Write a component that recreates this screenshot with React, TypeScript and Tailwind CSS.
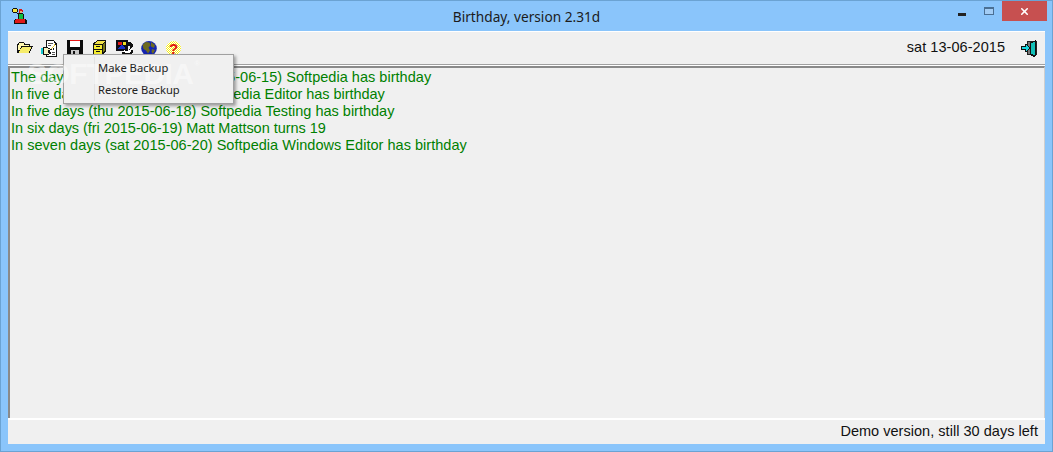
import React from 'react';
import { X } from 'lucide-react';

const lines = [
  { text: 'The day after tomorrow (mon 2015-06-15) Softpedia has birthday', cls: 'tracking-[0.03px]' },
  { text: 'In five days (thu 2015-06-18) Softpedia Editor has birthday', cls: 'tracking-[-0.03px]' },
  { text: 'In five days (thu 2015-06-18) Softpedia Testing has birthday', cls: '' },
  { text: 'In six days (fri 2015-06-19) Matt Mattson turns 19', cls: 'tracking-[-0.04px]' },
  { text: 'In seven days (sat 2015-06-20) Softpedia Windows Editor has birthday', cls: 'tracking-[0.03px]' },
];

function AppIcon() {
  return (
    <svg width="15" height="17" viewBox="0 0 15 17" shapeRendering="crispEdges">
      <path d="M1 0h4v1h1v3H5v1H1V4H0V1h1z" fill="#111" />
      <path d="M1 1h4v3H1z" fill="#f5e642" />
      <path d="M5 5h1v1h1v1h1v1H7V7H6V6H5z" fill="#111" />
      <path d="M7 1h3v1h1v2h-1v1H7z" fill="#d81818" />
      <path d="M8 3h2v2H8z" fill="#e8b080" />
      <path d="M6 5h5v1h1v5H6z" fill="#111" />
      <path d="M7 6h4v5H7z" fill="#0fc040" />
      <path d="M3 11h11v1h1v4H2v-4h1z" fill="#111" />
      <path d="M4 11h9v4H3v-3h1z" fill="#e01818" />
    </svg>
  );
}

function FolderIcon() {
  return (
    <svg width="16" height="12" viewBox="0 0 16 12" shapeRendering="crispEdges">
      <path d="M2 0h5v1h1v1h5v2h3v1h-1v2h-1v2h-1v2H0V2h1V1h1z" fill="#111" />
      <path d="M2 1h5v2h5v1H4v2H3v2H1V3h1z" fill="#fff8b0" />
      <path d="M5 5h9v2h-1v2h-1v2H2V9h1V7h1V6h1z" fill="#f6ec6a" />
    </svg>
  );
}

function NotesIcon() {
  return (
    <svg width="18" height="17" viewBox="0 0 18 17" shapeRendering="crispEdges">
      <path d="M5 0h8v1h1v1h1v1h1v14H5z" fill="#111" />
      <path d="M6 1h7v2h2v13H6z" fill="#fff" />
      <path d="M7 3h5v1H7zM7 5h3v1H7zM11 12h3v1h-3zM11 14h3v1h-3z" fill="#555" />
      <path d="M13 4h2v1h-1v1h-1v1h-1v1h-1v1h-1v1H9V9h1V8h1V7h1V6h1z" fill="#e8c830" />
      <path d="M14 3h1v2h-1zM12 8h1v2h-1zM8 9h1v2H8z" fill="#111" />
      <path d="M0 8h2v6H0z" fill="#18c8d0" />
      <path d="M2 7h5v1h2v1h2v1h-2v2h1v2H8v1H2z" fill="#111" />
      <path d="M3 8h4v1h2v1H7v3h1v1H3z" fill="#f3efc0" />
    </svg>
  );
}

function SaveIcon() {
  return (
    <svg width="16" height="16" viewBox="0 0 16 16" shapeRendering="crispEdges">
      <path d="M0 0h15l1 1v15H0z" fill="#0b0b0b" />
      <path d="M3 0h10v1H3z" fill="#e81818" />
      <path d="M3 1h10v6H3z" fill="#fff" />
      <path d="M4 10h8v6H4z" fill="#c8c8c8" />
      <path d="M6 11h2v4H6z" fill="#111" />
    </svg>
  );
}

function CabinetIcon() {
  return (
    <svg width="13" height="16" viewBox="0 0 13 16" shapeRendering="crispEdges">
      <path d="M4 0h9v12h-1v1h-1v1h-1v2H0V3h1V2h2V1h1z" fill="#111" />
      <path d="M4 1h8v1h-1v1h-1v1H2V3h1V2h1z" fill="#f0e04a" />
      <path d="M1 5h8v4H1zM1 10h8v5H1z" fill="#f5ec30" />
      <path d="M3 6h4v1H3zM3 11h4v1H3z" fill="#111" />
      <path d="M10 4h1V3h1v8h-1v1h-1z" fill="#77771a" />
    </svg>
  );
}

function PhotoIcon() {
  return (
    <svg width="17" height="16" viewBox="0 0 17 16" shapeRendering="crispEdges">
      <path d="M0 0h12v11H0z" fill="#0c0c14" />
      <path d="M2 2h4v3H2z" fill="#e01818" />
      <path d="M7 2h3v3H7z" fill="#f0e020" />
      <path d="M5 5h2v1h1v1h1v2H2V8h1V7h1V6h1z" fill="#1830c8" />
      <path d="M12 2h3v1h1v1h1v3h-1v1h-1v1h1v1h1v3h-1v1h-1v1H8v-1H6v-2h1v-1h2v1h2v-1h2V9h1V6h-2V4h-1z" fill="#111" />
      <path d="M13 3h2v1h1v3h-1v1h-1v2h-2v1H9v-1H8v1H7v1h2v1h5v-1h1v-2h1v-1h-1V9h-1V8h1V7h1V4h-1V3z" fill="#fff" />
    </svg>
  );
}

function GlobeIcon() {
  return (
    <svg width="16" height="15" viewBox="0 0 16 15">
      <ellipse cx="8" cy="7.5" rx="7.8" ry="7.4" fill="#1424b0" />
      <path d="M1.5 4l3-3 4 .5 1 3-2 2 1.5 3-2 3-2-3-2.5-1.5zM10 1l4 3-1 3-3-1.5zM11 8l3 1-2 4-1.5-2z" fill="#6d6a20" />
    </svg>
  );
}

function HelpIcon() {
  return (
    <div className="flex h-[15px] w-[15px] items-center justify-center rounded-full bg-[repeating-conic-gradient(#f8ee10_0_25%,#ffffff_0_50%)] bg-[length:2px_2px] text-[15px] leading-none font-bold text-[#e01010]">
      ?
    </div>
  );
}

function ExitIcon() {
  return (
    <svg width="16" height="17" viewBox="0 0 16 17" shapeRendering="crispEdges">
      <path d="M6 1h10v14H6z" fill="#222" />
      <path d="M7 2h2v12H7z" fill="#777" />
      <path d="M9 3h1V2h2V1h2V0h1v16h-1v1h-2v-1h-2v-1H9z" fill="#111" />
      <path d="M10 3h2V2h2v13h-2v-1h-2z" fill="#12c0b8" />
      <path d="M4 4h2v1h1v1h1v1h1v2H8v1H7v1H6v1H4v-2H0V6h4z" fill="#111" />
      <path d="M5 5h1v1h1v1h1v2H7v1H6v1H5V9H1V7h4z" fill="#18d8e0" />
    </svg>
  );
}

const toolIcons = [FolderIcon, NotesIcon, SaveIcon, CabinetIcon, PhotoIcon, GlobeIcon, HelpIcon];

export default function App() {
  return (
    <div className="relative flex h-[452px] w-[1053px] flex-col overflow-hidden border border-[#6ba3d3] bg-[#8ac5fb] font-['Liberation_Sans',Arial,sans-serif] text-[14.5px]">
      {/* Title bar */}
      <div className="relative flex h-[30px] shrink-0 items-center justify-center">
        <div className="absolute top-[7px] left-[11px]">
          <AppIcon />
        </div>
        <span className="mt-0.5 font-['Noto_Sans',sans-serif] text-[13.7px] text-[#1c1c1c]">Birthday, version 2.31d</span>
        <div className="absolute top-0 right-[5px] flex items-start">
          <div className="flex h-5 w-[26px] items-center justify-center">
            <div className="mt-[6px] h-[3px] w-[8px] bg-[#222]" />
          </div>
          <div className="flex h-5 w-[27px] items-center justify-center">
            <div className="h-[8px] w-[10px] border border-t-2 border-[#4a6f93] bg-[#a3cdf5]" />
          </div>
          <div className="flex h-5 w-[45px] items-center justify-center bg-[#c75050] text-white">
            <X size={11} strokeWidth={3.5} />
          </div>
        </div>
      </div>

      {/* Client area */}
      <div className="mx-[7px] mb-[7px] flex min-h-0 flex-1 flex-col bg-[#f0f0f0]">
        <div className="flex h-[33px] shrink-0 items-center border-t border-white pr-[8px] pl-[5px]">
          {toolIcons.map((Icon, i) => (
            <div key={i} className="flex w-[24.7px] justify-center">
              <Icon />
            </div>
          ))}
          <span className="mr-[16px] ml-auto tracking-[0.05px] text-[#111]">sat 13-06-2015</span>
          <ExitIcon />
        </div>
        <div className="h-[1px] shrink-0 bg-[#a0a0a0]" />
        <div className="h-[1px] shrink-0 bg-white" />
        <div className="min-h-0 flex-1 border-t-2 border-r border-l-2 border-t-[#8a8a8a] border-r-[#cfcfcf] border-l-[#8a8a8a] pt-px pl-px leading-[17px] text-[#008000]">
          {lines.map((line) => (
            <div key={line.text} className={`whitespace-nowrap ${line.cls}`}>{line.text}</div>
          ))}
        </div>
        <div className="flex h-[26px] shrink-0 items-center justify-end border-t-2 border-white pr-[7px] tracking-[0.03px] text-[#111]">
          Demo version, still 30 days left
        </div>
      </div>

      {/* Popup menu */}
      <div className="absolute top-[53px] left-[62px] h-[50px] w-[171px] border border-[#a0a0a0] bg-[#f0f0f0] pt-[2px] font-['Noto_Sans',sans-serif] text-[11.2px] text-[#222] shadow-[2px_2px_3px_rgba(0,0,0,0.35)]">
        <div className="absolute top-[2px] bottom-[2px] left-[30px] w-px bg-[#e2e2e2]" />
        <div className="relative z-10 flex h-[22px] items-center pl-[34px]">Make Backup</div>
        <div className="relative z-10 flex h-[22px] items-center pl-[34px]">Restore Backup</div>
      </div>

      {/* Watermark */}
      <div className="pointer-events-none absolute top-[58px] left-[26px] flex items-start text-[30px] leading-none font-bold tracking-[-0.6px] text-white/45">
        SOFTPEDIA
        <span className="mt-[1px] ml-[1px] text-[8px] tracking-normal">®</span>
      </div>
    </div>
  );
}
